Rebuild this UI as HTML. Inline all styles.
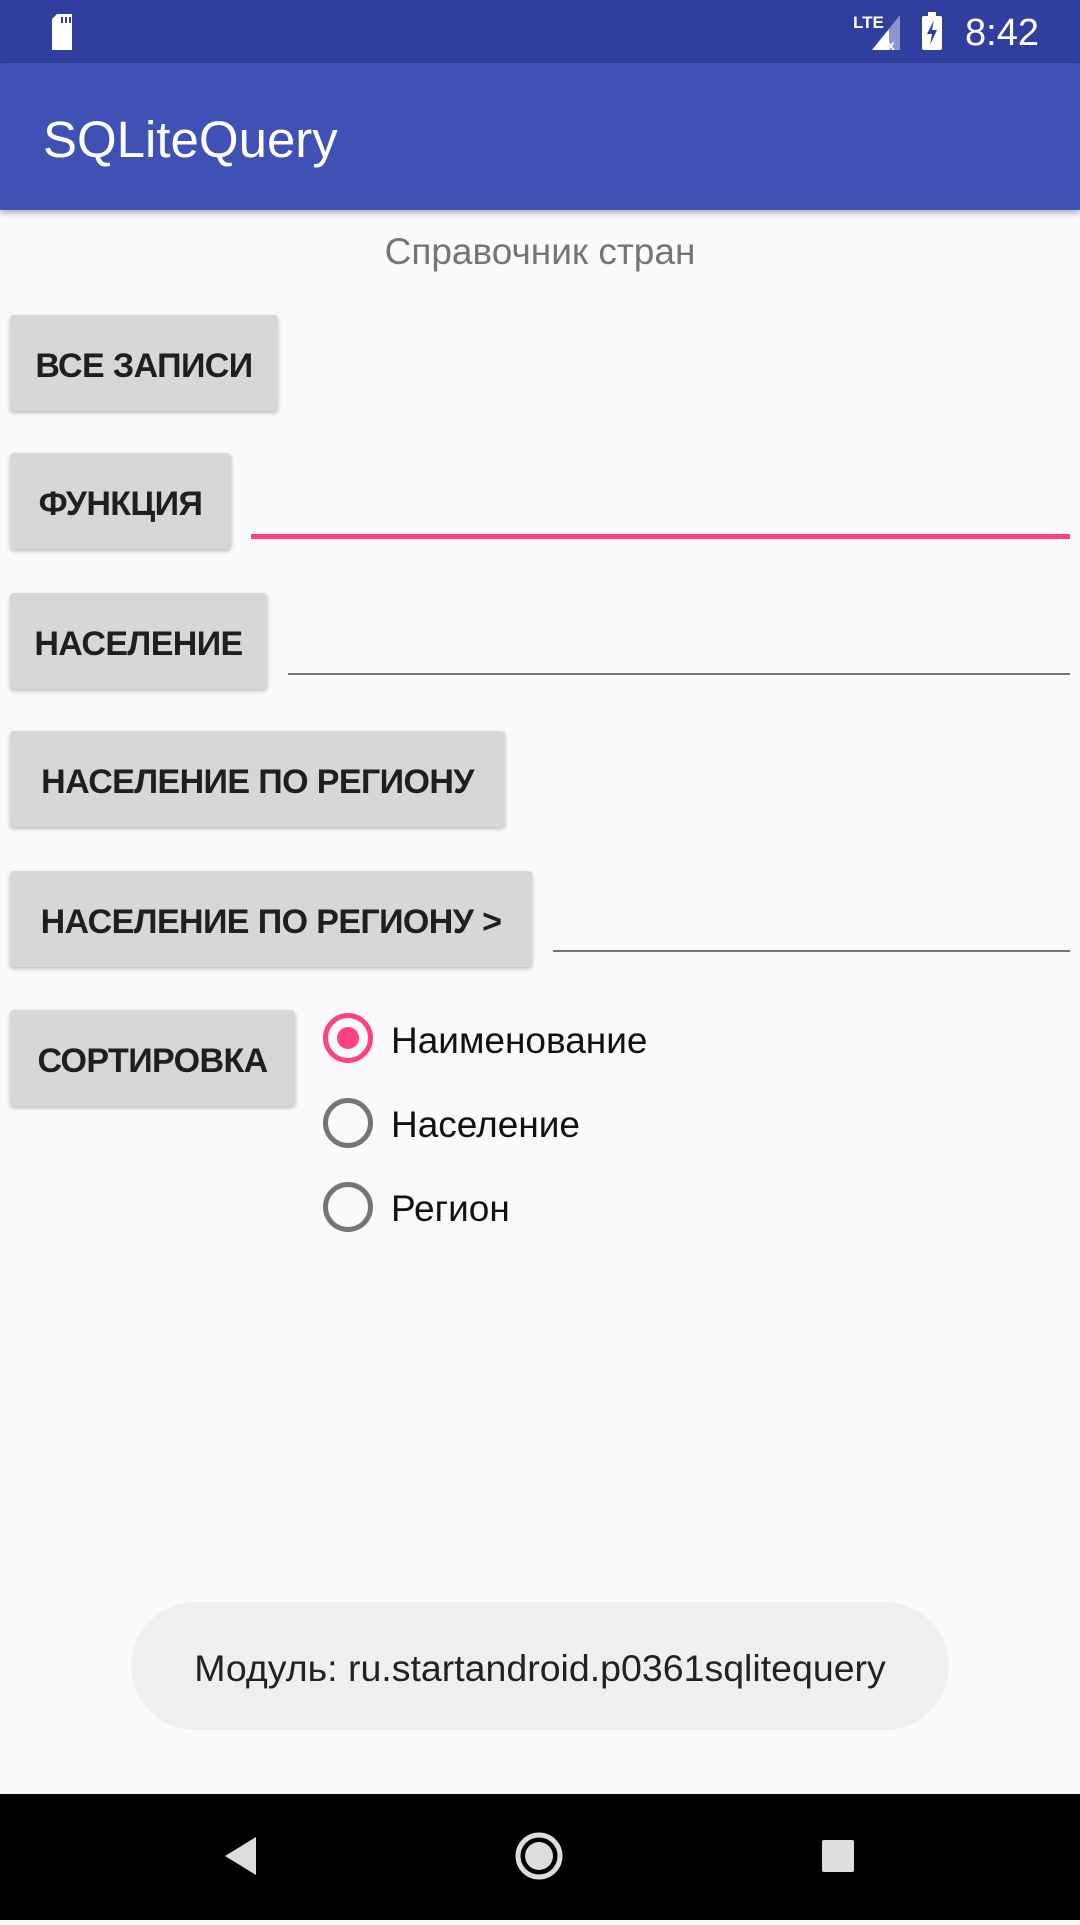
<!DOCTYPE html>
<html><head><meta charset="utf-8"><style>
body{margin:0;width:1080px;height:1920px;background:#fafafa;position:relative;overflow:hidden;font-family:"Liberation Sans",sans-serif}
.sb{position:absolute;left:0;top:0;width:1080px;height:63px;background:#303f9f}
.tb{position:absolute;left:0;top:63px;width:1080px;height:147px;background:#3f51b5;box-shadow:0 3px 6px rgba(0,0,0,.3)}
.title{position:absolute;left:43px;top:106px;color:#fff;font-size:51px;line-height:68px}
.sub{position:absolute;left:0;width:1080px;top:227px;text-align:center;color:#757575;font-size:37px;line-height:50px}
.btn{position:absolute;left:10px;height:96px;background:#d6d7d7;border-radius:4px;box-shadow:0 2px 4px rgba(0,0,0,.25);color:#1f1f1f;font-size:34px;font-weight:bold;line-height:102px;text-align:center;letter-spacing:-0.6px;overflow:hidden}
.line{position:absolute;height:2px;background:#767676;right:10px}
.radio{position:absolute;left:323px;width:40px;height:40px;border:5px solid #757575;border-radius:50%}
.rl{position:absolute;left:391px;font-size:37px;color:#111;line-height:50px}
.toast{position:absolute;left:131px;top:1602px;width:818px;height:128px;border-radius:64px;background:#efefef;text-align:center;line-height:132px;font-size:37.5px;color:#222}
.nav{position:absolute;left:0;top:1794px;width:1080px;height:126px;background:#000}
</style></head><body>
<div class="sb">
<svg width="1080" height="63" style="position:absolute;left:0;top:0">
<path d="M57 14h15v36h-20v-31z" fill="#fff"/>
<rect x="61" y="17" width="2" height="6" fill="#303f9f"/><rect x="65" y="17" width="2" height="6" fill="#303f9f"/><rect x="69" y="17" width="2" height="6" fill="#303f9f"/>
<text x="853" y="28" fill="#fff" font-size="17" font-family="Liberation Sans" font-weight="bold">LTE</text>
<path d="M872 50l28-35v35z" fill="#fff" opacity=".45"/><path d="M872 50l17-21v21z" fill="#fff"/>
<text x="887" y="50" fill="#fff" font-size="14" font-weight="bold">x</text>
<rect x="922" y="16" width="20" height="34" rx="2" fill="#fff"/><rect x="928" y="12" width="8" height="5" fill="#fff"/>
<path d="M934 20l-7 14h5l-2 11 7-15h-5z" fill="#303f9f"/>
<text x="965" y="45" fill="#fff" font-size="38" font-family="Liberation Sans">8:42</text>
</svg></div>
<div class="tb"></div>
<div class="title">SQLiteQuery</div>
<div class="sub">Справочник стран</div>
<div class="btn" style="top:315px;width:268px">ВСЕ ЗАПИСИ</div>
<div class="btn" style="top:453px;width:221px">ФУНКЦИЯ</div>
<div class="line" style="left:251px;top:534px;height:5px;background:#ff4081"></div>
<div class="btn" style="top:593px;width:257px">НАСЕЛЕНИЕ</div>
<div class="line" style="left:288px;top:673px"></div>
<div class="btn" style="top:731px;width:495px">НАСЕЛЕНИЕ ПО РЕГИОНУ</div>
<div class="btn" style="top:871px;width:522px">НАСЕЛЕНИЕ ПО РЕГИОНУ &gt;</div>
<div class="line" style="left:553px;top:950px"></div>
<div class="btn" style="top:1010px;width:285px">СОРТИРОВКА</div>
<div class="radio" style="top:1013px;border-color:#ff4081"><div style="position:absolute;left:9px;top:9px;width:22px;height:22px;border-radius:50%;background:#ff4081"></div></div>
<div class="radio" style="top:1098px"></div>
<div class="radio" style="top:1182px"></div>
<div class="rl" style="top:1016px">Наименование</div>
<div class="rl" style="top:1100px">Население</div>
<div class="rl" style="top:1184px">Регион</div>
<div class="toast">Модуль: ru.startandroid.p0361sqlitequery</div>
<div class="nav"><svg width="1080" height="126">
<path d="M256 43v38l-31-19z" fill="#ddd"/>
<circle cx="539" cy="62" r="21" fill="none" stroke="#ddd" stroke-width="5"/><circle cx="539" cy="62" r="14" fill="#ddd"/>
<rect x="822" y="46" width="32" height="32" rx="2" fill="#ddd"/>
</svg></div>
</body></html>
